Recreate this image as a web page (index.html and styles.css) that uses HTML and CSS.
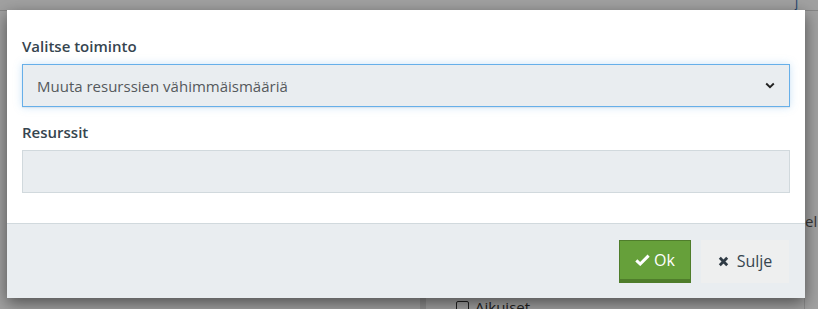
FILE: index.html
```html
<!DOCTYPE html>
<html>
<head>
    <title>Valitse toiminto</title>
    <link rel="stylesheet" href="styles.css">
</head>
<body>
    <div class="page">
        <div class="page-top"><span class="page-glyph">ʃ</span></div>
        <div class="page-main">
            <div class="page-side"></div>
            <div class="page-col">
                <label class="page-check"><span class="box"></span>Aikuiset</label>
            </div>
            <div class="page-edge"><span>ell</span></div>
        </div>
    </div>
    <div class="backdrop"></div>

    <div class="modal">
        <div class="modal-body">
            <label class="field-label" for="action">Valitse toiminto</label>
            <div class="select focus" id="action">
                <span>Muuta resurssien vähimmäismääriä</span>
                <svg class="chevron" width="10" height="7" viewBox="0 0 10 7">
                    <path d="M1.2 1.5 L5 5.2 L8.8 1.5" fill="none" stroke="#222" stroke-width="1.9"/>
                </svg>
            </div>
            <label class="field-label second" for="resources">Resurssit</label>
            <div class="input" id="resources"></div>
        </div>
        <div class="modal-footer">
            <button type="button" class="btn btn-ok">
                <svg width="15" height="12" viewBox="0 0 15 12">
                    <path d="M1.3 6.4 L5.2 10 L13.6 1.6" fill="none" stroke="#fff" stroke-width="3"/>
                </svg>Ok
            </button>
            <button type="button" class="btn btn-close">
                <svg width="11" height="11" viewBox="0 0 11 11">
                    <path d="M1.8 1.8 L9.2 9.2 M9.2 1.8 L1.8 9.2" fill="none" stroke="#2f3b45" stroke-width="2.8"/>
                </svg>Sulje
            </button>
        </div>
    </div>
</body>
</html>
```

FILE: styles.css
```css
body {
    margin: 0;
    font-family: "Open Sans", "Noto Sans", sans-serif;
    width: 818px;
    height: 309px;
    overflow: hidden;
    position: relative;
    background: #ffffff;
}

.page {
    height: 309px;
    display: flex;
    flex-direction: column;
}

.page-top {
    height: 10px;
    display: flex;
    justify-content: flex-end;
    padding-right: 20px;
    border-bottom: 1px solid #d4d4d4;
}

.page-glyph {
    font-size: 12px;
    color: #3a6fb0;
    line-height: 6px;
}

.page-main {
    flex: 1;
    display: flex;
}

.page-side {
    width: 420px;
    border-right: 6px solid #e2e2e2;
}

.page-col {
    flex: 1;
    display: flex;
    align-items: flex-end;
    padding-left: 30px;
}

.page-check {
    display: flex;
    align-items: center;
    gap: 6px;
    font-size: 15px;
    color: #333;
    margin-bottom: -8px;
}

.page-check .box {
    width: 11px;
    height: 11px;
    border: 1px solid #333;
    border-radius: 2px;
}

.page-edge {
    width: 13px;
    border-left: 1px solid #ddd;
    padding-top: 200px;
    font-size: 15px;
    color: #555;
    overflow: hidden;
}

.backdrop {
    position: absolute;
    inset: 0;
    background: rgba(0, 0, 0, 0.37);
}

.modal {
    position: absolute;
    top: 10px;
    left: 7px;
    width: 798px;
    background: #ffffff;
    box-shadow: 0 5px 15px rgba(0, 0, 0, 0.5);
    display: flex;
    flex-direction: column;
}

.modal-body {
    padding: 26px 15px 30px 15px;
    display: flex;
    flex-direction: column;
}

.field-label {
    font-size: 15px;
    font-weight: 600;
    color: #36454f;
    margin-bottom: 8px;
    line-height: 20px;
}

.field-label.second {
    margin-top: 15px;
}

.select,
.input {
    height: 41px;
    background: #e9edf0;
    border: 1px solid #d1d9dd;
    box-sizing: content-box;
}

.select {
    display: flex;
    align-items: center;
    justify-content: space-between;
    padding: 0 14px 0 14px;
    font-size: 15px;
    color: #55595c;
}

.select.focus {
    border-color: #66afe9;
    box-shadow: 0 1px 1px rgba(0, 0, 0, 0.05), 0 0 8px rgba(102, 175, 233, 0.35);
}

.modal-footer {
    border-top: 1px solid #d1d9dd;
    background: #e9edf0;
    height: 74px;
    display: flex;
    justify-content: flex-end;
    align-items: center;
    gap: 10px;
    padding: 0 16px;
}

.btn {
    height: 43px;
    border: none;
    font-family: inherit;
    font-size: 16px;
    display: flex;
    align-items: center;
    gap: 4px;
    cursor: pointer;
}

.btn-ok {
    width: 72px;
    justify-content: center;
    background: #66a03a;
    color: #ffffff;
    border: 1px solid #4f7d2b;
    border-bottom: 4px solid #4f7d2b;
    padding: 0 10px;
    margin-top: 1px;
}

.btn-close {
    width: 88px;
    justify-content: center;
    background: #eeefef;
    color: #36454f;
    gap: 8px;
}
```
